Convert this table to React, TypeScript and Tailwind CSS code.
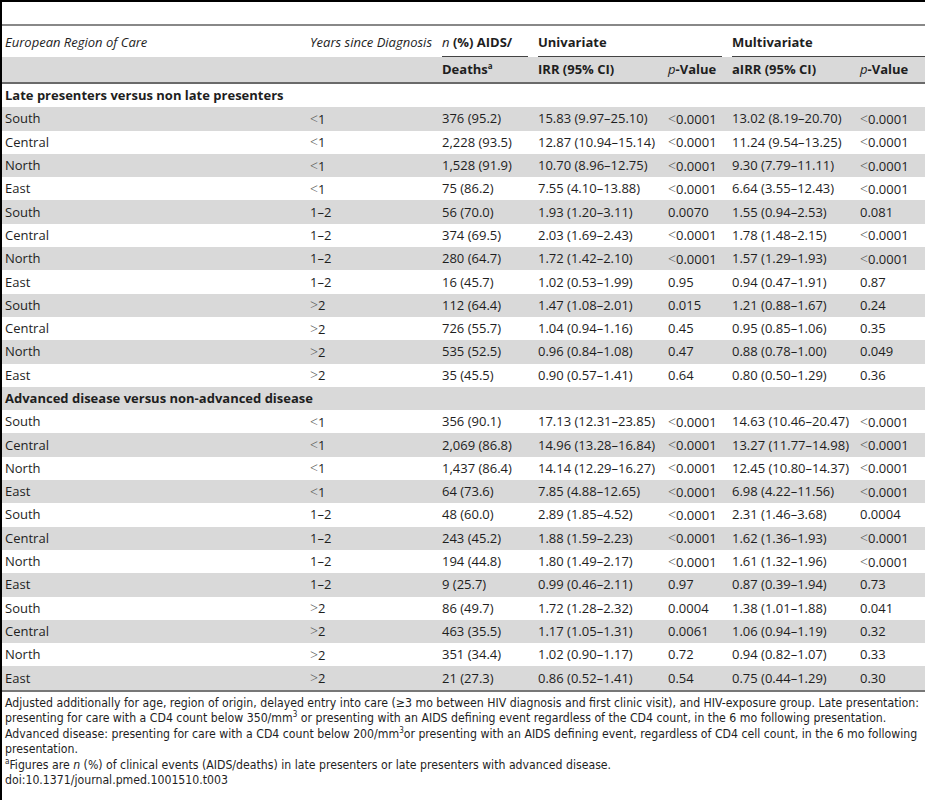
import React from "react";

type R = [string, string, string, string, string, string, string];

const late: R[] = [
  ["South", "<1", "376 (95.2)", "15.83 (9.97–25.10)", "<0.0001", "13.02 (8.19–20.70)", "<0.0001"],
  ["Central", "<1", "2,228 (93.5)", "12.87 (10.94–15.14)", "<0.0001", "11.24 (9.54–13.25)", "<0.0001"],
  ["North", "<1", "1,528 (91.9)", "10.70 (8.96–12.75)", "<0.0001", "9.30 (7.79–11.11)", "<0.0001"],
  ["East", "<1", "75 (86.2)", "7.55 (4.10–13.88)", "<0.0001", "6.64 (3.55–12.43)", "<0.0001"],
  ["South", "1–2", "56 (70.0)", "1.93 (1.20–3.11)", "0.0070", "1.55 (0.94–2.53)", "0.081"],
  ["Central", "1–2", "374 (69.5)", "2.03 (1.69–2.43)", "<0.0001", "1.78 (1.48–2.15)", "<0.0001"],
  ["North", "1–2", "280 (64.7)", "1.72 (1.42–2.10)", "<0.0001", "1.57 (1.29–1.93)", "<0.0001"],
  ["East", "1–2", "16 (45.7)", "1.02 (0.53–1.99)", "0.95", "0.94 (0.47–1.91)", "0.87"],
  ["South", ">2", "112 (64.4)", "1.47 (1.08–2.01)", "0.015", "1.21 (0.88–1.67)", "0.24"],
  ["Central", ">2", "726 (55.7)", "1.04 (0.94–1.16)", "0.45", "0.95 (0.85–1.06)", "0.35"],
  ["North", ">2", "535 (52.5)", "0.96 (0.84–1.08)", "0.47", "0.88 (0.78–1.00)", "0.049"],
  ["East", ">2", "35 (45.5)", "0.90 (0.57–1.41)", "0.64", "0.80 (0.50–1.29)", "0.36"],
];

const adv: R[] = [
  ["South", "<1", "356 (90.1)", "17.13 (12.31–23.85)", "<0.0001", "14.63 (10.46–20.47)", "<0.0001"],
  ["Central", "<1", "2,069 (86.8)", "14.96 (13.28–16.84)", "<0.0001", "13.27 (11.77–14.98)", "<0.0001"],
  ["North", "<1", "1,437 (86.4)", "14.14 (12.29–16.27)", "<0.0001", "12.45 (10.80–14.37)", "<0.0001"],
  ["East", "<1", "64 (73.6)", "7.85 (4.88–12.65)", "<0.0001", "6.98 (4.22–11.56)", "<0.0001"],
  ["South", "1–2", "48 (60.0)", "2.89 (1.85–4.52)", "<0.0001", "2.31 (1.46–3.68)", "0.0004"],
  ["Central", "1–2", "243 (45.2)", "1.88 (1.59–2.23)", "<0.0001", "1.62 (1.36–1.93)", "<0.0001"],
  ["North", "1–2", "194 (44.8)", "1.80 (1.49–2.17)", "<0.0001", "1.61 (1.32–1.96)", "<0.0001"],
  ["East", "1–2", "9 (25.7)", "0.99 (0.46–2.11)", "0.97", "0.87 (0.39–1.94)", "0.73"],
  ["South", ">2", "86 (49.7)", "1.72 (1.28–2.32)", "0.0004", "1.38 (1.01–1.88)", "0.041"],
  ["Central", ">2", "463 (35.5)", "1.17 (1.05–1.31)", "0.0061", "1.06 (0.94–1.19)", "0.32"],
  ["North", ">2", "351 (34.4)", "1.02 (0.90–1.17)", "0.72", "0.94 (0.82–1.07)", "0.33"],
  ["East", ">2", "21 (27.3)", "0.86 (0.52–1.41)", "0.54", "0.75 (0.44–1.29)", "0.30"],
];

function Val({ v }: { v: string }) {
  if (v.startsWith("<") || v.startsWith(">")) {
    return (
      <>
        <span className="font-light text-[#555] text-[14px]">{v[0]}</span>
        {v.slice(1)}
      </>
    );
  }
  return <>{v}</>;
}

const GRID = "grid grid-cols-[303px_132px_96px_130px_64px_128px_70px]";

function Row({ r, gray }: { r: R; gray: boolean }) {
  return (
    <div className={`${GRID} h-[23.3px] items-center ${gray ? "bg-[#d9d9d9]" : "bg-white"}`}>
      <div className="pl-[3px] whitespace-nowrap">{r[0]}</div>
      {r.slice(1).map((c, i) => (
        <div key={i} className="px-[5px] whitespace-nowrap">
          <Val v={c} />
        </div>
      ))}
    </div>
  );
}

function Section({ title, gray }: { title: string; gray: boolean }) {
  return (
    <div className={`h-[23.3px] flex items-center pl-[3px] font-bold whitespace-nowrap ${gray ? "bg-[#d9d9d9]" : "bg-white"}`}>
      {title}
    </div>
  );
}

function Sup({ children }: { children: React.ReactNode }) {
  return <span className="relative -top-[5px] text-[8px] leading-none">{children}</span>;
}

export default function App() {
  return (
    <div
      className="w-[925px] h-[800px] overflow-hidden bg-white border-l-2 border-black text-[#1e1e1e] text-[13px] leading-none"
      style={{ fontFamily: '"Open Sans", "Liberation Sans", sans-serif' }}
    >
      <div className="h-[2px] bg-black" />
      <div className="h-[22px]" />
      <div className="h-[2px] bg-[#888]" />
      {/* header row 1 */}
      <div className={`${GRID} h-[31px] items-end`}>
        <div className="pl-[3px] pb-[8px] italic whitespace-nowrap">European Region of Care</div>
        <div className="px-[5px] pb-[8px] italic whitespace-nowrap">Years since Diagnosis</div>
        <div className="px-[5px]">
          <div className="pb-[7px] border-b border-[#444] font-bold whitespace-nowrap">
            <span className="italic font-normal">n</span> (%) AIDS/
          </div>
        </div>
        <div className="col-span-2 px-[5px]">
          <div className="pb-[7px] border-b border-[#444] font-bold whitespace-nowrap">Univariate</div>
        </div>
        <div className="col-span-2 pl-[5px]">
          <div className="pb-[7px] border-b border-[#444] font-bold whitespace-nowrap">Multivariate</div>
        </div>
      </div>
      {/* header row 2 */}
      <div className={`${GRID} h-[27px] items-center bg-[#d9d9d9] border-b-2 border-[#6a6a6a] font-bold`}>
        <div />
        <div />
        <div className="px-[5px] whitespace-nowrap">
          Deaths<Sup>a</Sup>
        </div>
        <div className="px-[5px] whitespace-nowrap">IRR (95% CI)</div>
        <div className="px-[5px] whitespace-nowrap">
          <span className="italic font-normal">p</span>-Value
        </div>
        <div className="px-[5px] whitespace-nowrap">aIRR (95% CI)</div>
        <div className="px-[5px] whitespace-nowrap">
          <span className="italic font-normal">p</span>-Value
        </div>
      </div>
      <Section title="Late presenters versus non late presenters" gray={false} />
      {late.map((r, i) => (
        <Row key={"l" + i} r={r} gray={i % 2 === 0} />
      ))}
      <Section title="Advanced disease versus non-advanced disease" gray={true} />
      {adv.map((r, i) => (
        <Row key={"a" + i} r={r} gray={i % 2 === 1} />
      ))}
      <div className="h-[2px] bg-[#777]" />
      <div
        className="pl-[3px] pt-[4px] text-[12.2px] leading-[15.5px] whitespace-nowrap [font-stretch:condensed]"
        style={{ fontFamily: '"Liberation Sans Narrow", "DejaVu Sans Condensed", "Open Sans", sans-serif' }}
      >
        <div>
          Adjusted additionally for age, region of origin, delayed entry into care (≥3 mo between HIV diagnosis and first clinic visit), and HIV-exposure group. Late presentation:
        </div>
        <div>
          presenting for care with a CD4 count below 350/mm<Sup>3</Sup> or presenting with an AIDS defining event regardless of the CD4 count, in the 6 mo following presentation.
        </div>
        <div>
          Advanced disease: presenting for care with a CD4 count below 200/mm<Sup>3</Sup>or presenting with an AIDS defining event, regardless of CD4 cell count, in the 6 mo following
        </div>
        <div>presentation.</div>
        <div>
          <Sup>a</Sup>Figures are <span className="italic">n</span> (%) of clinical events (AIDS/deaths) in late presenters or late presenters with advanced disease.
        </div>
        <div>doi:10.1371/journal.pmed.1001510.t003</div>
      </div>
    </div>
  );
}
